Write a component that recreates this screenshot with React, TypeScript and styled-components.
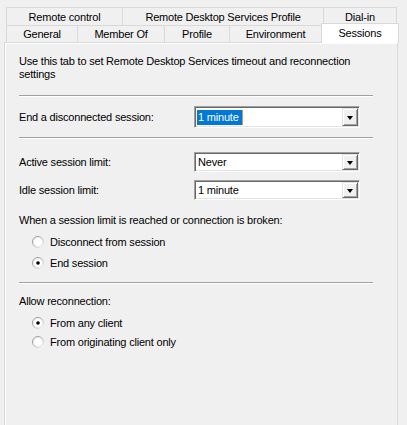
import React from "react";
import styled, { createGlobalStyle } from "styled-components";

const GlobalStyle = createGlobalStyle`
  html, body {
    margin: 0;
    padding: 0;
    background: #f0f0f0;
  }
  body {
    font-family: "Liberation Sans", Arial, sans-serif;
    font-size: 11px;
    letter-spacing: -0.2px;
    color: #000;
  }
`;

const Dialog = styled.div`
  width: 407px;
  height: 425px;
  box-sizing: border-box;
  padding-top: 7px;
  display: flex;
  flex-direction: column;
  overflow: hidden;
`;

const TabRow = styled.div`
  display: flex;
  align-items: flex-start;
  padding-left: 6px;
`;

const Tab = styled.div<{ $w: number; $active?: boolean }>`
  width: ${(p) => p.$w}px;
  height: ${(p) => (p.$active ? 20 : 18)}px;
  box-sizing: border-box;
  margin-left: -1px;
  &:first-child {
    margin-left: 0;
  }
  border: 1px solid #d9d9d9;
  border-bottom: none;
  background: ${(p) => (p.$active ? "#fff" : "#f0f0f0")};
  display: flex;
  align-items: center;
  justify-content: center;
  white-space: nowrap;
  ${(p) =>
    p.$active &&
    `
    margin-top: -2px;
    margin-bottom: -1px;
    position: relative;
    z-index: 1;
    padding-bottom: 1px;
  `}
`;

const LowerTabRow = styled(TabRow)`
  ${Tab} {
    height: 17px;
  }
  ${Tab}:last-child {
    height: 20px;
  }
`;

const Page = styled.div`
  flex: 1;
  margin-left: 4px;
  width: 394px;
  box-sizing: border-box;
  border: 1px solid #d9d9d9;
  border-bottom: none;
  box-shadow: inset 1px 1px 0 #fff;
  padding: 12px 24px 0 14px;
  display: flex;
  flex-direction: column;
`;

const Intro = styled.p`
  margin: 0;
  line-height: 13px;
`;

const Separator = styled.hr<{ $top: number }>`
  margin: ${(p) => p.$top}px 0 0;
  height: 0;
  border: none;
  border-top: 1px solid #a0a0a0;
  border-bottom: 1px solid #fff;
`;

const FieldRow = styled.div<{ $top: number }>`
  display: flex;
  align-items: center;
  margin-top: ${(p) => p.$top}px;
`;

const FieldLabel = styled.span`
  width: 175px;
  flex: none;
`;

const Combo = styled.div<{ $h: number; $focused?: boolean }>`
  width: 166px;
  height: ${(p) => p.$h}px;
  box-sizing: border-box;
  border: 1px solid;
  border-color: #a0a0a0 #fff #fff #a0a0a0;
  box-shadow: inset 1px 1px 0 #696969, inset -1px -1px 0 #e3e3e3;
  background: #fff;
  display: flex;
  align-items: stretch;
  padding: 1px;
`;

const ComboValue = styled.div<{ $selected?: boolean }>`
  flex: 1;
  display: flex;
  align-items: center;
  padding-left: 1px;
  span {
    line-height: 15px;
    padding: 0 3px 0 1px;
    ${(p) =>
      p.$selected &&
      `
      background: #0078d7;
      color: #fff;
      box-shadow: 1px 0 0 #f28c28;
    `}
  }
`;

const DropButton = styled.div`
  width: 16px;
  box-sizing: border-box;
  background: #f0f0f0;
  border: 1px solid;
  border-color: #e3e3e3 #696969 #696969 #e3e3e3;
  box-shadow: inset 1px 1px 0 #fff, inset -1px -1px 0 #a0a0a0;
  display: flex;
  align-items: center;
  justify-content: center;
`;

const Arrow = styled.span`
  width: 0;
  height: 0;
  border-left: 3.5px solid transparent;
  border-right: 3.5px solid transparent;
  border-top: 4px solid #000;
  margin-top: 1px;
`;

const Heading = styled.div<{ $top: number }>`
  margin-top: ${(p) => p.$top}px;
  line-height: 13px;
`;

const RadioGroup = styled.div<{ $top: number }>`
  margin-top: ${(p) => p.$top}px;
  display: flex;
  flex-direction: column;
`;

const RadioRow = styled.label<{ $h: number }>`
  height: ${(p) => p.$h}px;
  display: flex;
  align-items: center;
  gap: 6px;
  padding-left: 13px;
  svg {
    flex: none;
  }
`;

function Radio({ checked }: { checked?: boolean }) {
  return (
    <svg width="12" height="12" viewBox="0 0 12 12">
      <defs>
        <linearGradient id="rb" x1="0" y1="0" x2="1" y2="1">
          <stop offset="0" stopColor="#8c8c8c" />
          <stop offset="0.5" stopColor="#b0b0b0" />
          <stop offset="1" stopColor="#ffffff" />
        </linearGradient>
      </defs>
      <circle cx="6" cy="6" r="5.5" fill="#fff" stroke="url(#rb)" strokeWidth="1" />
      <circle cx="6" cy="6" r="4.5" fill="none" stroke="#e3e3e3" strokeWidth="0.8" />
      {checked && <circle cx="6" cy="6" r="1.8" fill="#000" />}
    </svg>
  );
}

function Select({ value, h, focused }: { value: string; h: number; focused?: boolean }) {
  return (
    <Combo $h={h} $focused={focused}>
      <ComboValue $selected={focused}>
        <span>{value}</span>
      </ComboValue>
      <DropButton>
        <Arrow />
      </DropButton>
    </Combo>
  );
}

export default function App() {
  return (
    <>
      <GlobalStyle />
      <Dialog>
        <TabRow>
          <Tab $w={117}>Remote control</Tab>
          <Tab $w={202}>Remote Desktop Services Profile</Tab>
          <Tab $w={74}>Dial-in</Tab>
        </TabRow>
        <LowerTabRow>
          <Tab $w={72}>General</Tab>
          <Tab $w={88}>Member Of</Tab>
          <Tab $w={66}>Profile</Tab>
          <Tab $w={93}>Environment</Tab>
          <Tab $w={78} $active>
            Sessions
          </Tab>
        </LowerTabRow>
        <Page>
          <Intro>
            Use this tab to set Remote Desktop Services timeout and reconnection settings
          </Intro>
          <Separator $top={14} />
          <FieldRow $top={9}>
            <FieldLabel>End a disconnected session:</FieldLabel>
            <Select value="1 minute" h={22} focused />
          </FieldRow>
          <Separator $top={9} />
          <FieldRow $top={13}>
            <FieldLabel>Active session limit:</FieldLabel>
            <Select value="Never" h={20} />
          </FieldRow>
          <FieldRow $top={8}>
            <FieldLabel>Idle session limit:</FieldLabel>
            <Select value="1 minute" h={20} />
          </FieldRow>
          <Heading $top={14}>When a session limit is reached or connection is broken:</Heading>
          <RadioGroup $top={4}>
            <RadioRow $h={21}>
              <Radio />
              Disconnect from session
            </RadioRow>
            <RadioRow $h={21}>
              <Radio checked />
              End session
            </RadioRow>
          </RadioGroup>
          <Separator $top={9} />
          <Heading $top={11}>Allow reconnection:</Heading>
          <RadioGroup $top={5}>
            <RadioRow $h={19}>
              <Radio checked />
              From any client
            </RadioRow>
            <RadioRow $h={19}>
              <Radio />
              From originating client only
            </RadioRow>
          </RadioGroup>
        </Page>
      </Dialog>
    </>
  );
}
